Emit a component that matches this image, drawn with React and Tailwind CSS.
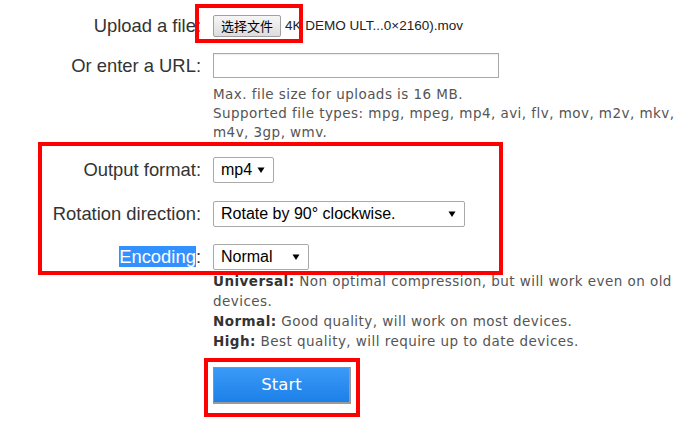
import React from 'react';

const labelFont = { fontFamily: '"Liberation Sans", Arial, sans-serif' };
const helpFont = { fontFamily: '"DejaVu Sans", Verdana, sans-serif' };

const Arrow = () => (
  <svg width="8" height="8" viewBox="0 0 8 8" className="shrink-0">
    <polygon points="0.5,1.5 7.5,1.5 4,7" fill="#000" />
  </svg>
);

const FakeSelect = ({ value, width }) => (
  <div
    className={`${width} h-[26px] flex items-center justify-between pl-[7px] pr-[8px] bg-white border border-[#a9a9a9] rounded-[2px] text-[16px] text-black`}
    style={labelFont}
  >
    <span>{value}</span>
    <Arrow />
  </div>
);

const Row = ({ label, children, className = '' }) => (
  <div className={`flex items-center ${className}`}>
    <div className="w-[201px] shrink-0 text-right text-[18.4px] text-[#333]" style={labelFont}>
      {label}
    </div>
    <div className="ml-3 flex items-center">{children}</div>
  </div>
);

const App = () => {
  return (
    <div className="relative w-[700px] h-[438px] bg-white overflow-hidden">
      <div className="pt-[15px]">
        <Row label="Upload a file:" className="h-[22px]">
          <button
            className="h-[22px] px-[7px] border border-[#a0a0a0] rounded-[2px] bg-gradient-to-b from-[#f6f6f6] to-[#dddddd] text-[13px] text-black"
            style={{ fontFamily: '"Noto Sans CJK SC", sans-serif' }}
          >
            选择文件
          </button>
          <span className="ml-[4px] text-[13.5px] text-[#222]" style={labelFont}>
            4K DEMO ULT...0×2160).mov
          </span>
        </Row>

        <Row label="Or enter a URL:" className="mt-[16px] h-[25px]">
          <div className="w-[286px] h-[25px] bg-white border border-[#a9a9a9] shadow-[inset_0_1px_1px_rgba(0,0,0,0.08)]" />
        </Row>

        <div className="ml-[213px] mt-[7px] text-[13.5px] tracking-[0.45px] leading-[19px] text-[#555] whitespace-nowrap" style={helpFont}>
          Max. file size for uploads is 16 MB.
          <br />
          Supported file types: mpg, mpeg, mp4, avi, flv, mov, m2v, mkv,
          <br />
          m4v, 3gp, wmv.
        </div>

        <Row label="Output format:" className="mt-[15px] h-[26px]">
          <FakeSelect value="mp4" width="w-[61px]" />
        </Row>

        <Row label="Rotation direction:" className="mt-[18px] h-[26px]">
          <FakeSelect value="Rotate by 90° clockwise." width="w-[252px]" />
        </Row>

        <Row
          label={
            <span>
              <span className="bg-[#3390ff] text-white">Encoding</span>:
            </span>
          }
          className="mt-[17px] h-[26px]"
        >
          <FakeSelect value="Normal" width="w-[96px]" />
        </Row>

        <div className="ml-[213px] mt-[1px] text-[13.5px] tracking-[0.45px] leading-[20px] text-[#555] whitespace-nowrap" style={helpFont}>
          <b className="text-[#333]">Universal:</b> Non optimal compression, but will work even on old
          <br />
          devices.
          <br />
          <b className="text-[#333]">Normal:</b> Good quality, will work on most devices.
          <br />
          <b className="text-[#333]">High:</b> Best quality, will require up to date devices.
        </div>

        <div className="ml-[213px] mt-[16px]">
          <button
            className="w-[138px] h-[37px] bg-gradient-to-b from-[#3b9af7] to-[#1b80e8] border border-[#7f95ad] border-r-2 border-b-2 border-r-[#9a9a9a] border-b-[#9a9a9a] text-white text-[16.5px]"
            style={helpFont}
          >
            Start
          </button>
        </div>
      </div>

      {/* red annotation boxes */}
      <div className="absolute left-[195px] top-[4px] w-[108px] h-[39px] border-4 border-[#ff0000] pointer-events-none" />
      <div className="absolute left-[38px] top-[142px] w-[465px] h-[133px] border-4 border-[#ff0000] pointer-events-none" />
      <div className="absolute left-[204px] top-[358px] w-[156px] h-[59px] border-4 border-[#ff0000] pointer-events-none" />
    </div>
  );
};

export default App;
